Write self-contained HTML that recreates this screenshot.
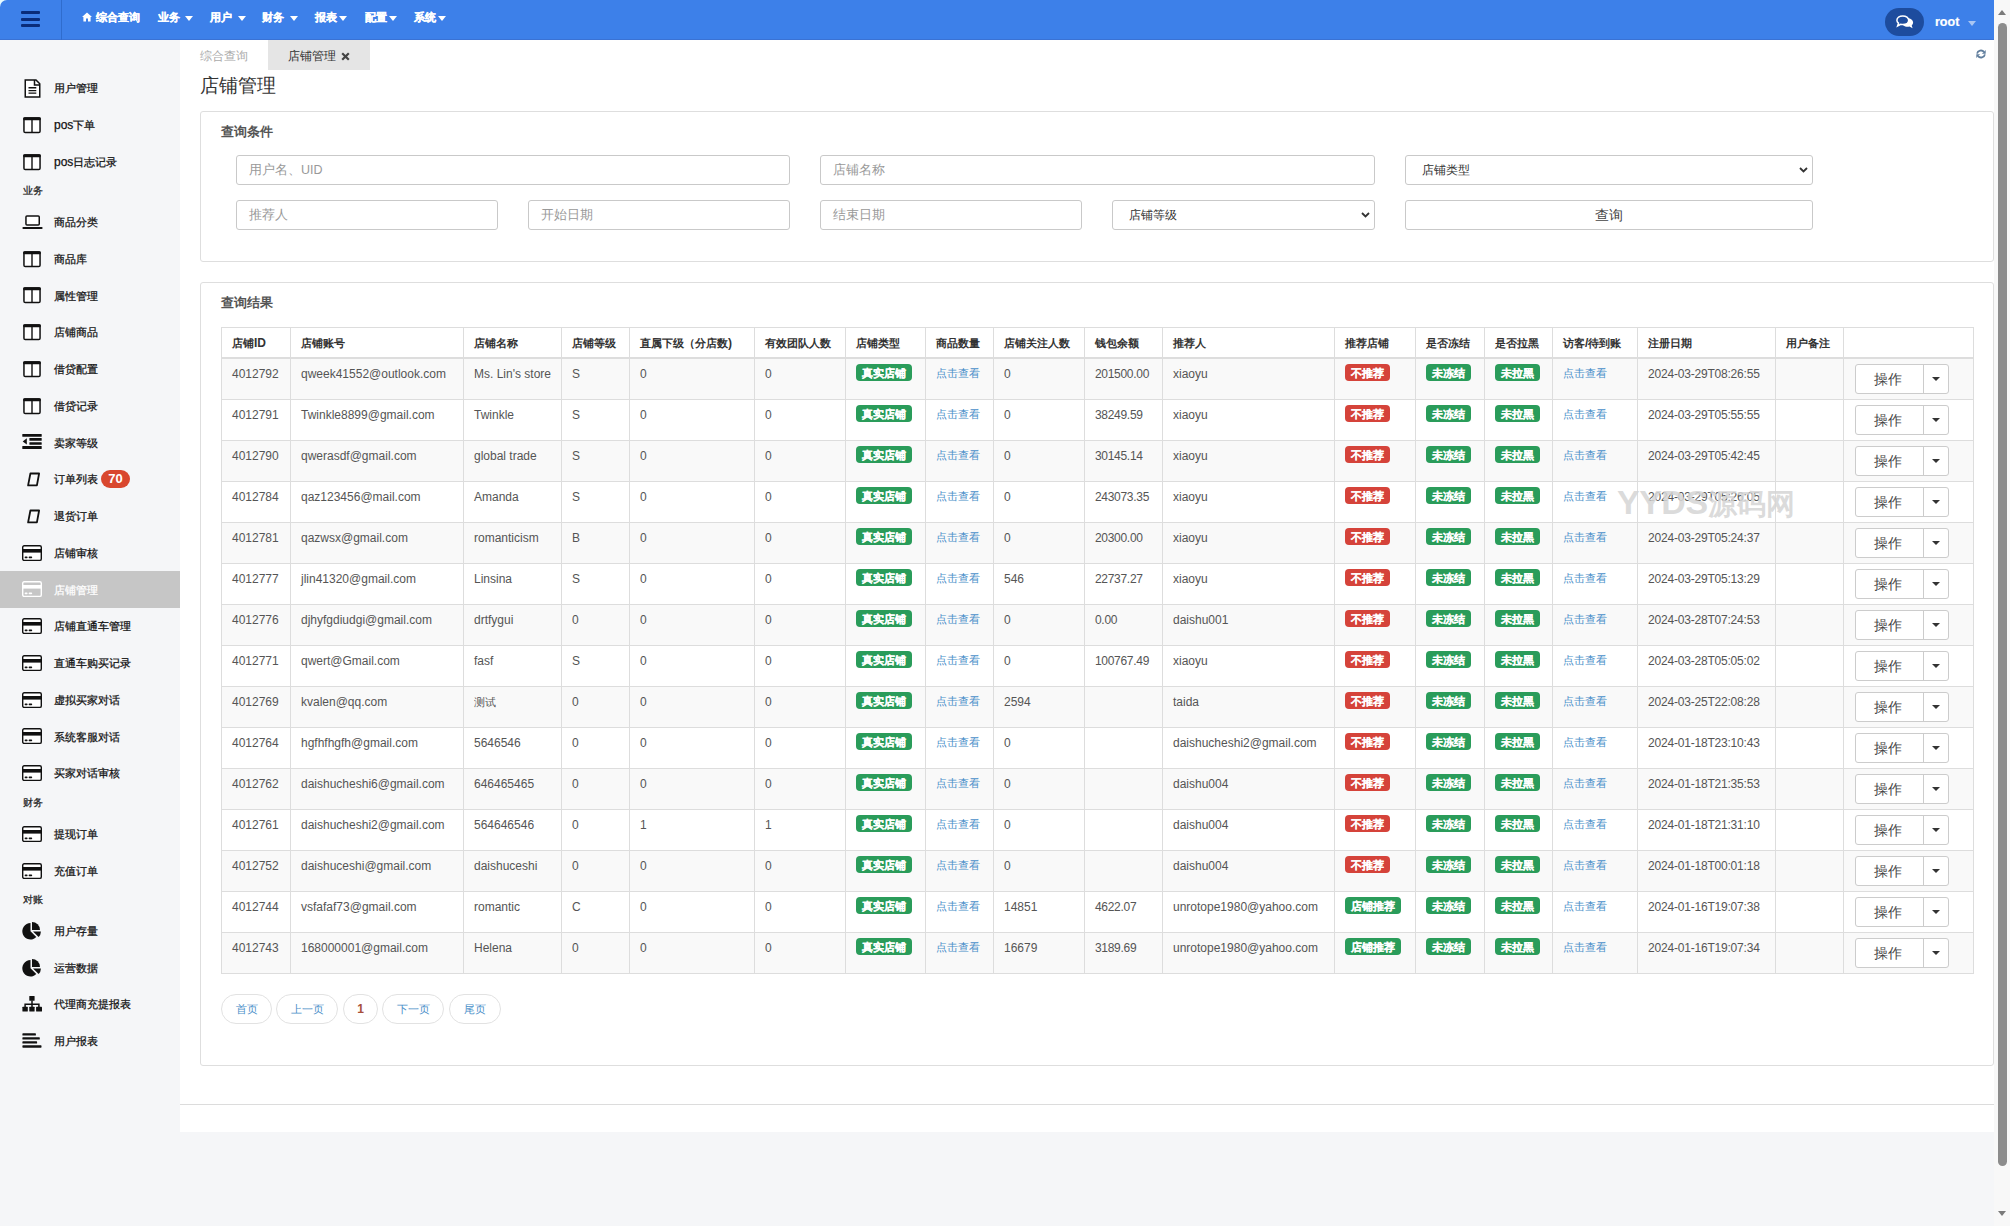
<!DOCTYPE html><html><head><meta charset="utf-8"><title>店铺管理</title><style>
*{box-sizing:border-box;margin:0;padding:0}
html,body{width:2010px;height:1226px;overflow:hidden}
body{background:#f5f6f8;font-family:"Liberation Sans", sans-serif;position:relative;color:#333}
.ab{position:absolute;white-space:nowrap}
.hd{position:absolute;left:0;top:0;width:1995px;height:40px;background:#3d80e9;border-top-left-radius:7px}
.mn{color:#fff;font-weight:bold;font-size:12px;line-height:14px;-webkit-text-stroke:0.2px #fff}
.car{position:absolute;width:0;height:0;border-left:4px solid transparent;border-right:4px solid transparent;border-top:5px solid #fff}
.side{font-size:12px;line-height:14px;color:#111;-webkit-text-stroke:0.25px currentColor}
.grp{font-size:11px;line-height:14px;color:#222;-webkit-text-stroke:0.25px currentColor}
.main{position:absolute;left:180px;top:40px;width:1814px;height:1092px;background:#fff}
.panel{position:absolute;border:1px solid #dedede;border-radius:3px;background:#fff}
.inp{position:absolute;height:30px;border:1px solid #c9c9c9;border-radius:3px;background:#fff;font-size:12px;color:#999;padding-left:12px;line-height:28px}
.td{font-size:12px;color:#555;line-height:14px}
.th{font-size:12px;color:#333;font-weight:bold;line-height:14px}
.bd{position:absolute;height:17px;border-radius:4px;color:#fff;font-size:11px;font-weight:bold;line-height:18.5px;text-align:center;-webkit-text-stroke:0.15px #fff;overflow:hidden}
.g{background:#2a9c5a}
.r{background:#d5433a}
.lk{color:#4a8fc9;font-size:12px;line-height:14px}
.pg{position:absolute;top:994px;height:30px;border:1px solid #e2e2e2;border-radius:15px;font-size:12px;line-height:28px;text-align:center;color:#4a8fc9;background:#fff}
</style></head><body>
<div class="ab" style="left:0;top:0;width:8px;height:8px;background:#e8fbff"></div>
<div class="hd"></div>
<div class="ab" style="left:0;top:39px;width:1995px;height:1px;background:#3a72d4"></div>
<div class="ab" style="left:61px;top:0;width:1px;height:40px;background:#2f6ccd"></div>
<div class="ab" style="left:21px;top:11px;width:19px;height:3px;border-radius:1px;background:#0a2c7a"></div>
<div class="ab" style="left:21px;top:18px;width:19px;height:3px;border-radius:1px;background:#0a2c7a"></div>
<div class="ab" style="left:21px;top:24px;width:19px;height:3px;border-radius:1px;background:#0a2c7a"></div>
<svg class="ab" style="left:82px;top:12px" width="10" height="10" viewBox="0 0 10 10"><path d="M5 0.5 L0 5 L1.4 5 L1.4 9.5 L4 9.5 L4 6.5 L6 6.5 L6 9.5 L8.6 9.5 L8.6 5 L10 5 Z" fill="#fff"/></svg>
<div class="ab mn" style="left:96px;top:10px"><span style="font-size:0.94em">综合查询</span></div>
<div class="ab mn" style="left:157.5px;top:10px"><span style="font-size:0.94em">业务</span></div>
<div class="car" style="left:184.5px;top:16px"></div>
<div class="ab mn" style="left:210px;top:10px"><span style="font-size:0.94em">用户</span></div>
<div class="car" style="left:238px;top:16px"></div>
<div class="ab mn" style="left:262px;top:10px"><span style="font-size:0.94em">财务</span></div>
<div class="car" style="left:289.5px;top:16px"></div>
<div class="ab mn" style="left:315px;top:10px"><span style="font-size:0.94em">报表</span></div>
<div class="car" style="left:339px;top:16px"></div>
<div class="ab mn" style="left:364.5px;top:10px"><span style="font-size:0.94em">配置</span></div>
<div class="car" style="left:388.5px;top:16px"></div>
<div class="ab mn" style="left:414px;top:10px"><span style="font-size:0.94em">系统</span></div>
<div class="car" style="left:438px;top:16px"></div>
<div class="ab" style="left:1885px;top:8px;width:39px;height:28px;border-radius:14px;background:#1d4c9e"></div>
<svg class="ab" style="left:1896px;top:14.5px" width="18" height="14" viewBox="0 0 18 14"><path d="M11.5 3.2c3.2 0 5.6 1.9 5.6 4.3 0 1.1-.5 2.1-1.4 2.9l.9 2.9-3.2-1.7c-.6.1-1.2.2-1.9.2-3.2 0-5.6-1.9-5.6-4.3s2.4-4.3 5.6-4.3z" fill="#fff"/><path d="M6.8 .9C3.5.9.9 2.8.9 5.2c0 1.2.6 2.2 1.6 3L1.6 10.9l3.1-1.6c.7.2 1.4.3 2.1.3 3.3 0 5.9-1.9 5.9-4.3S10.1.9 6.8.9z" fill="#1d4c9e" stroke="#fff" stroke-width="1.5"/></svg>
<div class="ab" style="left:1935px;top:15px;font-size:12.5px;font-weight:bold;color:#fff;line-height:14px;-webkit-text-stroke:0.2px #fff">root</div>
<div class="car" style="left:1968px;top:21px;border-top-color:#a9c6f3"></div>
<div class="ab" style="left:1994px;top:0;width:16px;height:1226px;background:#f8f8f8"></div>
<div class="ab" style="left:1998px;top:23px;width:9px;height:1143px;border-radius:5px;background:#8c8c8c"></div>
<div class="ab" style="left:1998px;top:10px;width:0;height:0;border-left:4.5px solid transparent;border-right:4.5px solid transparent;border-bottom:5px solid #7a7a7a"></div>
<div class="ab" style="left:1998px;top:1211px;width:0;height:0;border-left:4.5px solid transparent;border-right:4.5px solid transparent;border-top:5px solid #7a7a7a"></div>
<div class="ab" style="left:23.5px;top:78.75px;width:17px;height:19px;line-height:0"><svg width="17" height="19" viewBox="0 0 17 19"><path d="M1.25 .9H12L15.75 4.7V18.1H1.25z" fill="#fff" stroke="#111" stroke-width="1.5"/><path d="M10.5 .9V6h5.25" fill="none" stroke="#111" stroke-width="1.5"/><path d="M4.5 8.75h7.8M4.5 11.55h7.8M4.5 14.05h7.8" stroke="#111" stroke-width="1.3"/></svg></div>
<div class="ab side" style="left:54px;top:81.3px;color:#111"><span style="font-size:0.94em">用户管理</span></div>
<div class="ab" style="left:23px;top:116.80px;width:18px;height:17px;line-height:0"><svg width="18" height="17" viewBox="0 0 18 17"><rect x=".95" y=".95" width="16.1" height="14.6" rx="1.3" fill="#fff" stroke="#111" stroke-width="1.5"/><rect x=".2" y=".2" width="17.6" height="3" rx="1" fill="#111"/><path d="M9 1v15" stroke="#111" stroke-width="1.4"/></svg></div>
<div class="ab side" style="left:54px;top:118.0px;color:#111">pos<span style="font-size:0.94em">下单</span></div>
<div class="ab" style="left:23px;top:153.60px;width:18px;height:17px;line-height:0"><svg width="18" height="17" viewBox="0 0 18 17"><rect x=".95" y=".95" width="16.1" height="14.6" rx="1.3" fill="#fff" stroke="#111" stroke-width="1.5"/><rect x=".2" y=".2" width="17.6" height="3" rx="1" fill="#111"/><path d="M9 1v15" stroke="#111" stroke-width="1.4"/></svg></div>
<div class="ab side" style="left:54px;top:154.8px;color:#111">pos<span style="font-size:0.94em">日志记录</span></div>
<div class="ab grp" style="left:23px;top:182.7px"><span style="font-size:0.94em">业务</span></div>
<div class="ab" style="left:21.5px;top:215.00px;width:21px;height:14px;line-height:0"><svg width="21" height="14" viewBox="0 0 21 14"><rect x="3.95" y=".95" width="13.3" height="9.1" rx="1" fill="#fff" stroke="#111" stroke-width="1.5"/><rect x=".4" y="11.9" width="20.2" height="2.1" rx="1" fill="#111"/></svg></div>
<div class="ab side" style="left:54px;top:215.0px;color:#111"><span style="font-size:0.94em">商品分类</span></div>
<div class="ab" style="left:23px;top:250.55px;width:18px;height:17px;line-height:0"><svg width="18" height="17" viewBox="0 0 18 17"><rect x=".95" y=".95" width="16.1" height="14.6" rx="1.3" fill="#fff" stroke="#111" stroke-width="1.5"/><rect x=".2" y=".2" width="17.6" height="3" rx="1" fill="#111"/><path d="M9 1v15" stroke="#111" stroke-width="1.4"/></svg></div>
<div class="ab side" style="left:54px;top:251.8px;color:#111"><span style="font-size:0.94em">商品库</span></div>
<div class="ab" style="left:23px;top:287.30px;width:18px;height:17px;line-height:0"><svg width="18" height="17" viewBox="0 0 18 17"><rect x=".95" y=".95" width="16.1" height="14.6" rx="1.3" fill="#fff" stroke="#111" stroke-width="1.5"/><rect x=".2" y=".2" width="17.6" height="3" rx="1" fill="#111"/><path d="M9 1v15" stroke="#111" stroke-width="1.4"/></svg></div>
<div class="ab side" style="left:54px;top:288.5px;color:#111"><span style="font-size:0.94em">属性管理</span></div>
<div class="ab" style="left:23px;top:324.05px;width:18px;height:17px;line-height:0"><svg width="18" height="17" viewBox="0 0 18 17"><rect x=".95" y=".95" width="16.1" height="14.6" rx="1.3" fill="#fff" stroke="#111" stroke-width="1.5"/><rect x=".2" y=".2" width="17.6" height="3" rx="1" fill="#111"/><path d="M9 1v15" stroke="#111" stroke-width="1.4"/></svg></div>
<div class="ab side" style="left:54px;top:325.2px;color:#111"><span style="font-size:0.94em">店铺商品</span></div>
<div class="ab" style="left:23px;top:360.80px;width:18px;height:17px;line-height:0"><svg width="18" height="17" viewBox="0 0 18 17"><rect x=".95" y=".95" width="16.1" height="14.6" rx="1.3" fill="#fff" stroke="#111" stroke-width="1.5"/><rect x=".2" y=".2" width="17.6" height="3" rx="1" fill="#111"/><path d="M9 1v15" stroke="#111" stroke-width="1.4"/></svg></div>
<div class="ab side" style="left:54px;top:362.0px;color:#111"><span style="font-size:0.94em">借贷配置</span></div>
<div class="ab" style="left:23px;top:397.55px;width:18px;height:17px;line-height:0"><svg width="18" height="17" viewBox="0 0 18 17"><rect x=".95" y=".95" width="16.1" height="14.6" rx="1.3" fill="#fff" stroke="#111" stroke-width="1.5"/><rect x=".2" y=".2" width="17.6" height="3" rx="1" fill="#111"/><path d="M9 1v15" stroke="#111" stroke-width="1.4"/></svg></div>
<div class="ab side" style="left:54px;top:398.8px;color:#111"><span style="font-size:0.94em">借贷记录</span></div>
<div class="ab" style="left:22px;top:433.90px;width:20px;height:16px;line-height:0"><svg width="20" height="16" viewBox="0 0 20 16"><rect x=".3" y="0" width="19.4" height="2.75" rx=".5" fill="#111"/><rect x="7.4" y="4.1" width="12.3" height="2.6" rx=".5" fill="#111"/><rect x="7.4" y="8.2" width="12.3" height="2.5" rx=".5" fill="#111"/><rect x=".3" y="12" width="19.4" height="2.9" rx=".5" fill="#111"/><path d="M4.8 4.2L.7 7.4 4.8 10.6z" fill="#111"/></svg></div>
<div class="ab side" style="left:54px;top:435.5px;color:#111"><span style="font-size:0.94em">卖家等级</span></div>
<div class="ab" style="left:26px;top:471.85px;width:15px;height:15px;line-height:0"><svg width="15" height="15" viewBox="0 0 15 15"><path d="M4.4 1.5h8.7l-2.2 11.9H2.1z" fill="#f9fafb" stroke="#111" stroke-width="1.8" stroke-linejoin="round"/></svg></div>
<div class="ab side" style="left:54px;top:472.2px;color:#111"><span style="font-size:0.94em">订单列表</span></div>
<div class="ab" style="left:101px;top:470px;width:29px;height:18px;border-radius:9px;background:#d9472e;color:#fff;font-size:13px;font-weight:bold;line-height:18px;text-align:center">70</div>
<div class="ab" style="left:26px;top:508.60px;width:15px;height:15px;line-height:0"><svg width="15" height="15" viewBox="0 0 15 15"><path d="M4.4 1.5h8.7l-2.2 11.9H2.1z" fill="#f9fafb" stroke="#111" stroke-width="1.8" stroke-linejoin="round"/></svg></div>
<div class="ab side" style="left:54px;top:509.0px;color:#111"><span style="font-size:0.94em">退货订单</span></div>
<div class="ab" style="left:22px;top:544.65px;width:20px;height:17px;line-height:0"><svg width="20" height="17" viewBox="0 0 20 17"><rect x=".7" y=".7" width="18.6" height="14.7" rx="1.5" fill="#fff" stroke="#111" stroke-width="1.4"/><rect x=".7" y="4" width="18.6" height="3.6" fill="#111"/><rect x="2.6" y="11.6" width="3" height="1.6" rx=".8" fill="#111"/><rect x="6.6" y="11.6" width="3.6" height="1.6" rx=".8" fill="#111"/></svg></div>
<div class="ab side" style="left:54px;top:545.8px;color:#111"><span style="font-size:0.94em">店铺审核</span></div>
<div class="ab" style="left:0;top:571.1px;width:180px;height:36.7px;background:#c6c6c6"></div>
<div class="ab" style="left:22px;top:581.40px;width:20px;height:17px;line-height:0"><svg width="20" height="17" viewBox="0 0 20 17"><rect x=".7" y=".7" width="18.6" height="14.7" rx="1.5" fill="#c6c6c6" stroke="#fff" stroke-width="1.4"/><rect x=".7" y="4" width="18.6" height="3.6" fill="#fff"/><rect x="2.6" y="11.6" width="3" height="1.6" rx=".8" fill="#fff"/><rect x="6.6" y="11.6" width="3.6" height="1.6" rx=".8" fill="#fff"/></svg></div>
<div class="ab side" style="left:54px;top:582.5px;color:#fff"><span style="font-size:0.94em">店铺管理</span></div>
<div class="ab" style="left:22px;top:618.15px;width:20px;height:17px;line-height:0"><svg width="20" height="17" viewBox="0 0 20 17"><rect x=".7" y=".7" width="18.6" height="14.7" rx="1.5" fill="#fff" stroke="#111" stroke-width="1.4"/><rect x=".7" y="4" width="18.6" height="3.6" fill="#111"/><rect x="2.6" y="11.6" width="3" height="1.6" rx=".8" fill="#111"/><rect x="6.6" y="11.6" width="3.6" height="1.6" rx=".8" fill="#111"/></svg></div>
<div class="ab side" style="left:54px;top:619.2px;color:#111"><span style="font-size:0.94em">店铺直通车管理</span></div>
<div class="ab" style="left:22px;top:654.90px;width:20px;height:17px;line-height:0"><svg width="20" height="17" viewBox="0 0 20 17"><rect x=".7" y=".7" width="18.6" height="14.7" rx="1.5" fill="#fff" stroke="#111" stroke-width="1.4"/><rect x=".7" y="4" width="18.6" height="3.6" fill="#111"/><rect x="2.6" y="11.6" width="3" height="1.6" rx=".8" fill="#111"/><rect x="6.6" y="11.6" width="3.6" height="1.6" rx=".8" fill="#111"/></svg></div>
<div class="ab side" style="left:54px;top:656.0px;color:#111"><span style="font-size:0.94em">直通车购买记录</span></div>
<div class="ab" style="left:22px;top:691.65px;width:20px;height:17px;line-height:0"><svg width="20" height="17" viewBox="0 0 20 17"><rect x=".7" y=".7" width="18.6" height="14.7" rx="1.5" fill="#fff" stroke="#111" stroke-width="1.4"/><rect x=".7" y="4" width="18.6" height="3.6" fill="#111"/><rect x="2.6" y="11.6" width="3" height="1.6" rx=".8" fill="#111"/><rect x="6.6" y="11.6" width="3.6" height="1.6" rx=".8" fill="#111"/></svg></div>
<div class="ab side" style="left:54px;top:692.8px;color:#111"><span style="font-size:0.94em">虚拟买家对话</span></div>
<div class="ab" style="left:22px;top:728.40px;width:20px;height:17px;line-height:0"><svg width="20" height="17" viewBox="0 0 20 17"><rect x=".7" y=".7" width="18.6" height="14.7" rx="1.5" fill="#fff" stroke="#111" stroke-width="1.4"/><rect x=".7" y="4" width="18.6" height="3.6" fill="#111"/><rect x="2.6" y="11.6" width="3" height="1.6" rx=".8" fill="#111"/><rect x="6.6" y="11.6" width="3.6" height="1.6" rx=".8" fill="#111"/></svg></div>
<div class="ab side" style="left:54px;top:729.5px;color:#111"><span style="font-size:0.94em">系统客服对话</span></div>
<div class="ab" style="left:22px;top:765.15px;width:20px;height:17px;line-height:0"><svg width="20" height="17" viewBox="0 0 20 17"><rect x=".7" y=".7" width="18.6" height="14.7" rx="1.5" fill="#fff" stroke="#111" stroke-width="1.4"/><rect x=".7" y="4" width="18.6" height="3.6" fill="#111"/><rect x="2.6" y="11.6" width="3" height="1.6" rx=".8" fill="#111"/><rect x="6.6" y="11.6" width="3.6" height="1.6" rx=".8" fill="#111"/></svg></div>
<div class="ab side" style="left:54px;top:766.2px;color:#111"><span style="font-size:0.94em">买家对话审核</span></div>
<div class="ab grp" style="left:23px;top:794.7px"><span style="font-size:0.94em">财务</span></div>
<div class="ab" style="left:22px;top:825.90px;width:20px;height:17px;line-height:0"><svg width="20" height="17" viewBox="0 0 20 17"><rect x=".7" y=".7" width="18.6" height="14.7" rx="1.5" fill="#fff" stroke="#111" stroke-width="1.4"/><rect x=".7" y="4" width="18.6" height="3.6" fill="#111"/><rect x="2.6" y="11.6" width="3" height="1.6" rx=".8" fill="#111"/><rect x="6.6" y="11.6" width="3.6" height="1.6" rx=".8" fill="#111"/></svg></div>
<div class="ab side" style="left:54px;top:827.0px;color:#111"><span style="font-size:0.94em">提现订单</span></div>
<div class="ab" style="left:22px;top:862.70px;width:20px;height:17px;line-height:0"><svg width="20" height="17" viewBox="0 0 20 17"><rect x=".7" y=".7" width="18.6" height="14.7" rx="1.5" fill="#fff" stroke="#111" stroke-width="1.4"/><rect x=".7" y="4" width="18.6" height="3.6" fill="#111"/><rect x="2.6" y="11.6" width="3" height="1.6" rx=".8" fill="#111"/><rect x="6.6" y="11.6" width="3.6" height="1.6" rx=".8" fill="#111"/></svg></div>
<div class="ab side" style="left:54px;top:863.8px;color:#111"><span style="font-size:0.94em">充值订单</span></div>
<div class="ab grp" style="left:23px;top:892.4px"><span style="font-size:0.94em">对账</span></div>
<div class="ab" style="left:22px;top:921.90px;width:20px;height:18px;line-height:0"><svg width="20" height="18" viewBox="0 0 20 18"><path d="M8.5 9.3V1.1A8.2 8.2 0 1 0 14.3 15.1z" fill="#111"/><path d="M10 7.9V0A8 8 0 0 1 18 7.9z" fill="#111"/><path d="M11 9.4h7.9A8 8 0 0 1 16.6 15z" fill="#111"/></svg></div>
<div class="ab side" style="left:54px;top:923.9px;color:#111"><span style="font-size:0.94em">用户存量</span></div>
<div class="ab" style="left:22px;top:958.65px;width:20px;height:18px;line-height:0"><svg width="20" height="18" viewBox="0 0 20 18"><path d="M8.5 9.3V1.1A8.2 8.2 0 1 0 14.3 15.1z" fill="#111"/><path d="M10 7.9V0A8 8 0 0 1 18 7.9z" fill="#111"/><path d="M11 9.4h7.9A8 8 0 0 1 16.6 15z" fill="#111"/></svg></div>
<div class="ab side" style="left:54px;top:960.6px;color:#111"><span style="font-size:0.94em">运营数据</span></div>
<div class="ab" style="left:22px;top:995.90px;width:20px;height:16px;line-height:0"><svg width="20" height="16" viewBox="0 0 20 16"><rect x="7.3" y="0" width="5.3" height="4.8" rx=".6" fill="#111"/><path d="M10 4.5v6.5M3.1 11V8.25h13.8V11" fill="none" stroke="#111" stroke-width="1.5"/><rect x=".4" y="10.7" width="5.4" height="4.9" rx=".6" fill="#111"/><rect x="7.3" y="10.7" width="5.3" height="4.9" rx=".6" fill="#111"/><rect x="14.1" y="10.7" width="5.9" height="4.9" rx=".6" fill="#111"/></svg></div>
<div class="ab side" style="left:54px;top:997.4px;color:#111"><span style="font-size:0.94em">代理商充提报表</span></div>
<div class="ab" style="left:22px;top:1033.45px;width:20px;height:15px;line-height:0"><svg width="20" height="15" viewBox="0 0 20 15"><rect x=".4" y=".3" width="13.5" height="2.2" rx=".6" fill="#111"/><rect x=".4" y="4.2" width="17.4" height="2.4" rx=".6" fill="#111"/><rect x=".4" y="8.3" width="14.7" height="2.2" rx=".6" fill="#111"/><rect x=".4" y="12.3" width="19.1" height="2.4" rx=".6" fill="#111"/></svg></div>
<div class="ab side" style="left:54px;top:1034.2px;color:#111"><span style="font-size:0.94em">用户报表</span></div>
<div class="main"></div>
<div class="ab" style="left:180px;top:1104px;width:1814px;height:1px;background:#dcdcdc"></div>
<div class="ab" style="left:200px;top:49px;font-size:12px;line-height:14px;color:#aaa">综合查询</div>
<div class="ab" style="left:268px;top:40px;width:102px;height:30px;background:#e5e5e5"></div>
<div class="ab" style="left:288px;top:49px;font-size:12px;line-height:14px;color:#333">店铺管理</div>
<svg class="ab" style="left:341px;top:52px" width="9" height="9" viewBox="0 0 9 9"><path d="M1.2 1.2l6.6 6.6M7.8 1.2l-6.6 6.6" stroke="#444" stroke-width="2.2"/></svg>
<svg class="ab" style="left:1975.5px;top:48.8px" width="10" height="10" viewBox="0 0 10 10"><path d="M1.1 4.6A3.9 3.7 0 0 1 8 2.9" fill="none" stroke="#5f7d9c" stroke-width="1.8"/><path d="M9.7 .9v3.8H5.9z" fill="#5f7d9c"/><path d="M8.9 5.4A3.9 3.7 0 0 1 2 7.1" fill="none" stroke="#5f7d9c" stroke-width="1.8"/><path d="M.3 9.1V5.3h3.8z" fill="#5f7d9c"/></svg>
<div class="ab" style="left:200px;top:73px;font-size:20px;line-height:24px;color:#333"><span style="font-size:0.955em">店铺管理</span></div>
<div class="panel" style="left:200px;top:111px;width:1794px;height:151px"></div>
<div class="ab" style="left:221px;top:124px;font-size:13px;font-weight:bold;line-height:15px;color:#555">查询条件</div>
<div class="inp" style="left:236px;top:155px;width:554px;color:#999;font-size:12.5px;padding-left:12px">用户名、UID</div>
<div class="inp" style="left:820px;top:155px;width:555px;color:#999;font-size:12.5px;padding-left:12px">店铺名称</div>
<div class="inp" style="left:1405px;top:155px;width:408px;color:#333;font-size:12px;padding-left:16px">店铺类型</div>
<svg class="ab" style="left:1799px;top:167px" width="9" height="6" viewBox="0 0 9 6"><path d="M1 1l3.5 3.5L8 1" fill="none" stroke="#333" stroke-width="1.8"/></svg>
<div class="inp" style="left:236px;top:200px;width:262px;color:#999;font-size:12.5px;padding-left:12px">推荐人</div>
<div class="inp" style="left:528px;top:200px;width:262px;color:#999;font-size:12.5px;padding-left:12px">开始日期</div>
<div class="inp" style="left:820px;top:200px;width:262px;color:#999;font-size:12.5px;padding-left:12px">结束日期</div>
<div class="inp" style="left:1112px;top:200px;width:263px;color:#333;font-size:12px;padding-left:16px">店铺等级</div>
<svg class="ab" style="left:1361px;top:212px" width="9" height="6" viewBox="0 0 9 6"><path d="M1 1l3.5 3.5L8 1" fill="none" stroke="#333" stroke-width="1.8"/></svg>
<div class="inp" style="left:1405px;top:200px;width:408px;text-align:center;color:#444;padding-left:0;font-size:14px">查询</div>
<div class="panel" style="left:200px;top:282px;width:1794px;height:784px"></div>
<div class="ab" style="left:221px;top:295px;font-size:13px;font-weight:bold;line-height:15px;color:#555">查询结果</div>
<div class="ab" style="left:221px;top:359px;width:1752px;height:41px;background:#f9f9f9"></div>
<div class="ab" style="left:221px;top:400px;width:1752px;height:41px;background:#fff"></div>
<div class="ab" style="left:221px;top:441px;width:1752px;height:41px;background:#f9f9f9"></div>
<div class="ab" style="left:221px;top:482px;width:1752px;height:41px;background:#fff"></div>
<div class="ab" style="left:221px;top:523px;width:1752px;height:41px;background:#f9f9f9"></div>
<div class="ab" style="left:221px;top:564px;width:1752px;height:41px;background:#fff"></div>
<div class="ab" style="left:221px;top:605px;width:1752px;height:41px;background:#f9f9f9"></div>
<div class="ab" style="left:221px;top:646px;width:1752px;height:41px;background:#fff"></div>
<div class="ab" style="left:221px;top:687px;width:1752px;height:41px;background:#f9f9f9"></div>
<div class="ab" style="left:221px;top:728px;width:1752px;height:41px;background:#fff"></div>
<div class="ab" style="left:221px;top:769px;width:1752px;height:41px;background:#f9f9f9"></div>
<div class="ab" style="left:221px;top:810px;width:1752px;height:41px;background:#fff"></div>
<div class="ab" style="left:221px;top:851px;width:1752px;height:41px;background:#f9f9f9"></div>
<div class="ab" style="left:221px;top:892px;width:1752px;height:41px;background:#fff"></div>
<div class="ab" style="left:221px;top:933px;width:1752px;height:41px;background:#f9f9f9"></div>
<div class="ab" style="left:221px;top:327px;width:1753px;height:1px;background:#dddddd"></div>
<div class="ab" style="left:221px;top:357px;width:1753px;height:2px;background:#dddddd"></div>
<div class="ab" style="left:221px;top:399px;width:1753px;height:1px;background:#dddddd"></div>
<div class="ab" style="left:221px;top:440px;width:1753px;height:1px;background:#dddddd"></div>
<div class="ab" style="left:221px;top:481px;width:1753px;height:1px;background:#dddddd"></div>
<div class="ab" style="left:221px;top:522px;width:1753px;height:1px;background:#dddddd"></div>
<div class="ab" style="left:221px;top:563px;width:1753px;height:1px;background:#dddddd"></div>
<div class="ab" style="left:221px;top:604px;width:1753px;height:1px;background:#dddddd"></div>
<div class="ab" style="left:221px;top:645px;width:1753px;height:1px;background:#dddddd"></div>
<div class="ab" style="left:221px;top:686px;width:1753px;height:1px;background:#dddddd"></div>
<div class="ab" style="left:221px;top:727px;width:1753px;height:1px;background:#dddddd"></div>
<div class="ab" style="left:221px;top:768px;width:1753px;height:1px;background:#dddddd"></div>
<div class="ab" style="left:221px;top:809px;width:1753px;height:1px;background:#dddddd"></div>
<div class="ab" style="left:221px;top:850px;width:1753px;height:1px;background:#dddddd"></div>
<div class="ab" style="left:221px;top:891px;width:1753px;height:1px;background:#dddddd"></div>
<div class="ab" style="left:221px;top:932px;width:1753px;height:1px;background:#dddddd"></div>
<div class="ab" style="left:221px;top:973px;width:1753px;height:1px;background:#dddddd"></div>
<div class="ab" style="left:221px;top:327px;width:1px;height:647px;background:#dddddd"></div>
<div class="ab" style="left:290px;top:327px;width:1px;height:647px;background:#dddddd"></div>
<div class="ab" style="left:463px;top:327px;width:1px;height:647px;background:#dddddd"></div>
<div class="ab" style="left:561px;top:327px;width:1px;height:647px;background:#dddddd"></div>
<div class="ab" style="left:629px;top:327px;width:1px;height:647px;background:#dddddd"></div>
<div class="ab" style="left:754px;top:327px;width:1px;height:647px;background:#dddddd"></div>
<div class="ab" style="left:845px;top:327px;width:1px;height:647px;background:#dddddd"></div>
<div class="ab" style="left:925px;top:327px;width:1px;height:647px;background:#dddddd"></div>
<div class="ab" style="left:993px;top:327px;width:1px;height:647px;background:#dddddd"></div>
<div class="ab" style="left:1084px;top:327px;width:1px;height:647px;background:#dddddd"></div>
<div class="ab" style="left:1162px;top:327px;width:1px;height:647px;background:#dddddd"></div>
<div class="ab" style="left:1334px;top:327px;width:1px;height:647px;background:#dddddd"></div>
<div class="ab" style="left:1415px;top:327px;width:1px;height:647px;background:#dddddd"></div>
<div class="ab" style="left:1484px;top:327px;width:1px;height:647px;background:#dddddd"></div>
<div class="ab" style="left:1552px;top:327px;width:1px;height:647px;background:#dddddd"></div>
<div class="ab" style="left:1637px;top:327px;width:1px;height:647px;background:#dddddd"></div>
<div class="ab" style="left:1775px;top:327px;width:1px;height:647px;background:#dddddd"></div>
<div class="ab" style="left:1843px;top:327px;width:1px;height:647px;background:#dddddd"></div>
<div class="ab" style="left:1973px;top:327px;width:1px;height:647px;background:#dddddd"></div>
<div class="ab th" style="left:232px;top:335.5px"><span style="font-size:0.94em">店铺</span>ID</div>
<div class="ab th" style="left:301px;top:335.5px"><span style="font-size:0.94em">店铺账号</span></div>
<div class="ab th" style="left:474px;top:335.5px"><span style="font-size:0.94em">店铺名称</span></div>
<div class="ab th" style="left:572px;top:335.5px"><span style="font-size:0.94em">店铺等级</span></div>
<div class="ab th" style="left:640px;top:335.5px"><span style="font-size:0.94em">直属下级（分店数</span>)</div>
<div class="ab th" style="left:765px;top:335.5px"><span style="font-size:0.94em">有效团队人数</span></div>
<div class="ab th" style="left:856px;top:335.5px"><span style="font-size:0.94em">店铺类型</span></div>
<div class="ab th" style="left:936px;top:335.5px"><span style="font-size:0.94em">商品数量</span></div>
<div class="ab th" style="left:1004px;top:335.5px"><span style="font-size:0.94em">店铺关注人数</span></div>
<div class="ab th" style="left:1095px;top:335.5px"><span style="font-size:0.94em">钱包余额</span></div>
<div class="ab th" style="left:1173px;top:335.5px"><span style="font-size:0.94em">推荐人</span></div>
<div class="ab th" style="left:1345px;top:335.5px"><span style="font-size:0.94em">推荐店铺</span></div>
<div class="ab th" style="left:1426px;top:335.5px"><span style="font-size:0.94em">是否冻结</span></div>
<div class="ab th" style="left:1495px;top:335.5px"><span style="font-size:0.94em">是否拉黑</span></div>
<div class="ab th" style="left:1563px;top:335.5px"><span style="font-size:0.94em">访客</span>/<span style="font-size:0.94em">待到账</span></div>
<div class="ab th" style="left:1648px;top:335.5px"><span style="font-size:0.94em">注册日期</span></div>
<div class="ab th" style="left:1786px;top:335.5px"><span style="font-size:0.94em">用户备注</span></div>
<div class="ab td" style="left:232px;top:367px">4012792</div>
<div class="ab td" style="left:301px;top:367px">qweek41552@outlook.com</div>
<div class="ab td" style="left:474px;top:367px">Ms. Lin's store</div>
<div class="ab td" style="left:572px;top:367px">S</div>
<div class="ab td" style="left:640px;top:367px">0</div>
<div class="ab td" style="left:765px;top:367px">0</div>
<div class="bd g" style="left:856px;top:364px;width:56px">真实店铺</div>
<div class="ab lk" style="left:936px;top:366px"><span style="font-size:0.94em">点击查看</span></div>
<div class="ab td" style="left:1004px;top:367px">0</div>
<div class="ab td" style="left:1095px;top:367px;letter-spacing:-0.3px">201500.00</div>
<div class="ab td" style="left:1173px;top:367px">xiaoyu</div>
<div class="bd r" style="left:1345px;top:364px;width:45px">不推荐</div>
<div class="bd g" style="left:1426px;top:364px;width:45px">未冻结</div>
<div class="bd g" style="left:1495px;top:364px;width:45px">未拉黑</div>
<div class="ab lk" style="left:1563px;top:366px"><span style="font-size:0.94em">点击查看</span></div>
<div class="ab td" style="left:1648px;top:367px;letter-spacing:-0.2px">2024-03-29T08:26:55</div>
<div class="ab" style="left:1855px;top:364px;width:94px;height:30px;border:1px solid #ccc;border-radius:3px;background:#fff"></div>
<div class="ab" style="left:1923px;top:364px;width:1px;height:30px;background:#ccc"></div>
<div class="ab" style="left:1874px;top:371px;font-size:14px;line-height:16px;color:#444">操作</div>
<div class="car" style="left:1932px;top:377px;border-top-color:#333;border-left-width:4px;border-right-width:4px;border-top-width:4px"></div>
<div class="ab td" style="left:232px;top:408px">4012791</div>
<div class="ab td" style="left:301px;top:408px">Twinkle8899@gmail.com</div>
<div class="ab td" style="left:474px;top:408px">Twinkle</div>
<div class="ab td" style="left:572px;top:408px">S</div>
<div class="ab td" style="left:640px;top:408px">0</div>
<div class="ab td" style="left:765px;top:408px">0</div>
<div class="bd g" style="left:856px;top:405px;width:56px">真实店铺</div>
<div class="ab lk" style="left:936px;top:407px"><span style="font-size:0.94em">点击查看</span></div>
<div class="ab td" style="left:1004px;top:408px">0</div>
<div class="ab td" style="left:1095px;top:408px;letter-spacing:-0.3px">38249.59</div>
<div class="ab td" style="left:1173px;top:408px">xiaoyu</div>
<div class="bd r" style="left:1345px;top:405px;width:45px">不推荐</div>
<div class="bd g" style="left:1426px;top:405px;width:45px">未冻结</div>
<div class="bd g" style="left:1495px;top:405px;width:45px">未拉黑</div>
<div class="ab lk" style="left:1563px;top:407px"><span style="font-size:0.94em">点击查看</span></div>
<div class="ab td" style="left:1648px;top:408px;letter-spacing:-0.2px">2024-03-29T05:55:55</div>
<div class="ab" style="left:1855px;top:405px;width:94px;height:30px;border:1px solid #ccc;border-radius:3px;background:#fff"></div>
<div class="ab" style="left:1923px;top:405px;width:1px;height:30px;background:#ccc"></div>
<div class="ab" style="left:1874px;top:412px;font-size:14px;line-height:16px;color:#444">操作</div>
<div class="car" style="left:1932px;top:418px;border-top-color:#333;border-left-width:4px;border-right-width:4px;border-top-width:4px"></div>
<div class="ab td" style="left:232px;top:449px">4012790</div>
<div class="ab td" style="left:301px;top:449px">qwerasdf@gmail.com</div>
<div class="ab td" style="left:474px;top:449px">global trade</div>
<div class="ab td" style="left:572px;top:449px">S</div>
<div class="ab td" style="left:640px;top:449px">0</div>
<div class="ab td" style="left:765px;top:449px">0</div>
<div class="bd g" style="left:856px;top:446px;width:56px">真实店铺</div>
<div class="ab lk" style="left:936px;top:448px"><span style="font-size:0.94em">点击查看</span></div>
<div class="ab td" style="left:1004px;top:449px">0</div>
<div class="ab td" style="left:1095px;top:449px;letter-spacing:-0.3px">30145.14</div>
<div class="ab td" style="left:1173px;top:449px">xiaoyu</div>
<div class="bd r" style="left:1345px;top:446px;width:45px">不推荐</div>
<div class="bd g" style="left:1426px;top:446px;width:45px">未冻结</div>
<div class="bd g" style="left:1495px;top:446px;width:45px">未拉黑</div>
<div class="ab lk" style="left:1563px;top:448px"><span style="font-size:0.94em">点击查看</span></div>
<div class="ab td" style="left:1648px;top:449px;letter-spacing:-0.2px">2024-03-29T05:42:45</div>
<div class="ab" style="left:1855px;top:446px;width:94px;height:30px;border:1px solid #ccc;border-radius:3px;background:#fff"></div>
<div class="ab" style="left:1923px;top:446px;width:1px;height:30px;background:#ccc"></div>
<div class="ab" style="left:1874px;top:453px;font-size:14px;line-height:16px;color:#444">操作</div>
<div class="car" style="left:1932px;top:459px;border-top-color:#333;border-left-width:4px;border-right-width:4px;border-top-width:4px"></div>
<div class="ab td" style="left:232px;top:490px">4012784</div>
<div class="ab td" style="left:301px;top:490px">qaz123456@mail.com</div>
<div class="ab td" style="left:474px;top:490px">Amanda</div>
<div class="ab td" style="left:572px;top:490px">S</div>
<div class="ab td" style="left:640px;top:490px">0</div>
<div class="ab td" style="left:765px;top:490px">0</div>
<div class="bd g" style="left:856px;top:487px;width:56px">真实店铺</div>
<div class="ab lk" style="left:936px;top:489px"><span style="font-size:0.94em">点击查看</span></div>
<div class="ab td" style="left:1004px;top:490px">0</div>
<div class="ab td" style="left:1095px;top:490px;letter-spacing:-0.3px">243073.35</div>
<div class="ab td" style="left:1173px;top:490px">xiaoyu</div>
<div class="bd r" style="left:1345px;top:487px;width:45px">不推荐</div>
<div class="bd g" style="left:1426px;top:487px;width:45px">未冻结</div>
<div class="bd g" style="left:1495px;top:487px;width:45px">未拉黑</div>
<div class="ab lk" style="left:1563px;top:489px"><span style="font-size:0.94em">点击查看</span></div>
<div class="ab td" style="left:1648px;top:490px;letter-spacing:-0.2px">2024-03-29T05:26:05</div>
<div class="ab" style="left:1855px;top:487px;width:94px;height:30px;border:1px solid #ccc;border-radius:3px;background:#fff"></div>
<div class="ab" style="left:1923px;top:487px;width:1px;height:30px;background:#ccc"></div>
<div class="ab" style="left:1874px;top:494px;font-size:14px;line-height:16px;color:#444">操作</div>
<div class="car" style="left:1932px;top:500px;border-top-color:#333;border-left-width:4px;border-right-width:4px;border-top-width:4px"></div>
<div class="ab td" style="left:232px;top:531px">4012781</div>
<div class="ab td" style="left:301px;top:531px">qazwsx@gmail.com</div>
<div class="ab td" style="left:474px;top:531px">romanticism</div>
<div class="ab td" style="left:572px;top:531px">B</div>
<div class="ab td" style="left:640px;top:531px">0</div>
<div class="ab td" style="left:765px;top:531px">0</div>
<div class="bd g" style="left:856px;top:528px;width:56px">真实店铺</div>
<div class="ab lk" style="left:936px;top:530px"><span style="font-size:0.94em">点击查看</span></div>
<div class="ab td" style="left:1004px;top:531px">0</div>
<div class="ab td" style="left:1095px;top:531px;letter-spacing:-0.3px">20300.00</div>
<div class="ab td" style="left:1173px;top:531px">xiaoyu</div>
<div class="bd r" style="left:1345px;top:528px;width:45px">不推荐</div>
<div class="bd g" style="left:1426px;top:528px;width:45px">未冻结</div>
<div class="bd g" style="left:1495px;top:528px;width:45px">未拉黑</div>
<div class="ab lk" style="left:1563px;top:530px"><span style="font-size:0.94em">点击查看</span></div>
<div class="ab td" style="left:1648px;top:531px;letter-spacing:-0.2px">2024-03-29T05:24:37</div>
<div class="ab" style="left:1855px;top:528px;width:94px;height:30px;border:1px solid #ccc;border-radius:3px;background:#fff"></div>
<div class="ab" style="left:1923px;top:528px;width:1px;height:30px;background:#ccc"></div>
<div class="ab" style="left:1874px;top:535px;font-size:14px;line-height:16px;color:#444">操作</div>
<div class="car" style="left:1932px;top:541px;border-top-color:#333;border-left-width:4px;border-right-width:4px;border-top-width:4px"></div>
<div class="ab td" style="left:232px;top:572px">4012777</div>
<div class="ab td" style="left:301px;top:572px">jlin41320@gmail.com</div>
<div class="ab td" style="left:474px;top:572px">Linsina</div>
<div class="ab td" style="left:572px;top:572px">S</div>
<div class="ab td" style="left:640px;top:572px">0</div>
<div class="ab td" style="left:765px;top:572px">0</div>
<div class="bd g" style="left:856px;top:569px;width:56px">真实店铺</div>
<div class="ab lk" style="left:936px;top:571px"><span style="font-size:0.94em">点击查看</span></div>
<div class="ab td" style="left:1004px;top:572px">546</div>
<div class="ab td" style="left:1095px;top:572px;letter-spacing:-0.3px">22737.27</div>
<div class="ab td" style="left:1173px;top:572px">xiaoyu</div>
<div class="bd r" style="left:1345px;top:569px;width:45px">不推荐</div>
<div class="bd g" style="left:1426px;top:569px;width:45px">未冻结</div>
<div class="bd g" style="left:1495px;top:569px;width:45px">未拉黑</div>
<div class="ab lk" style="left:1563px;top:571px"><span style="font-size:0.94em">点击查看</span></div>
<div class="ab td" style="left:1648px;top:572px;letter-spacing:-0.2px">2024-03-29T05:13:29</div>
<div class="ab" style="left:1855px;top:569px;width:94px;height:30px;border:1px solid #ccc;border-radius:3px;background:#fff"></div>
<div class="ab" style="left:1923px;top:569px;width:1px;height:30px;background:#ccc"></div>
<div class="ab" style="left:1874px;top:576px;font-size:14px;line-height:16px;color:#444">操作</div>
<div class="car" style="left:1932px;top:582px;border-top-color:#333;border-left-width:4px;border-right-width:4px;border-top-width:4px"></div>
<div class="ab td" style="left:232px;top:613px">4012776</div>
<div class="ab td" style="left:301px;top:613px">djhyfgdiudgi@gmail.com</div>
<div class="ab td" style="left:474px;top:613px">drtfygui</div>
<div class="ab td" style="left:572px;top:613px">0</div>
<div class="ab td" style="left:640px;top:613px">0</div>
<div class="ab td" style="left:765px;top:613px">0</div>
<div class="bd g" style="left:856px;top:610px;width:56px">真实店铺</div>
<div class="ab lk" style="left:936px;top:612px"><span style="font-size:0.94em">点击查看</span></div>
<div class="ab td" style="left:1004px;top:613px">0</div>
<div class="ab td" style="left:1095px;top:613px;letter-spacing:-0.3px">0.00</div>
<div class="ab td" style="left:1173px;top:613px">daishu001</div>
<div class="bd r" style="left:1345px;top:610px;width:45px">不推荐</div>
<div class="bd g" style="left:1426px;top:610px;width:45px">未冻结</div>
<div class="bd g" style="left:1495px;top:610px;width:45px">未拉黑</div>
<div class="ab lk" style="left:1563px;top:612px"><span style="font-size:0.94em">点击查看</span></div>
<div class="ab td" style="left:1648px;top:613px;letter-spacing:-0.2px">2024-03-28T07:24:53</div>
<div class="ab" style="left:1855px;top:610px;width:94px;height:30px;border:1px solid #ccc;border-radius:3px;background:#fff"></div>
<div class="ab" style="left:1923px;top:610px;width:1px;height:30px;background:#ccc"></div>
<div class="ab" style="left:1874px;top:617px;font-size:14px;line-height:16px;color:#444">操作</div>
<div class="car" style="left:1932px;top:623px;border-top-color:#333;border-left-width:4px;border-right-width:4px;border-top-width:4px"></div>
<div class="ab td" style="left:232px;top:654px">4012771</div>
<div class="ab td" style="left:301px;top:654px">qwert@Gmail.com</div>
<div class="ab td" style="left:474px;top:654px">fasf</div>
<div class="ab td" style="left:572px;top:654px">S</div>
<div class="ab td" style="left:640px;top:654px">0</div>
<div class="ab td" style="left:765px;top:654px">0</div>
<div class="bd g" style="left:856px;top:651px;width:56px">真实店铺</div>
<div class="ab lk" style="left:936px;top:653px"><span style="font-size:0.94em">点击查看</span></div>
<div class="ab td" style="left:1004px;top:654px">0</div>
<div class="ab td" style="left:1095px;top:654px;letter-spacing:-0.3px">100767.49</div>
<div class="ab td" style="left:1173px;top:654px">xiaoyu</div>
<div class="bd r" style="left:1345px;top:651px;width:45px">不推荐</div>
<div class="bd g" style="left:1426px;top:651px;width:45px">未冻结</div>
<div class="bd g" style="left:1495px;top:651px;width:45px">未拉黑</div>
<div class="ab lk" style="left:1563px;top:653px"><span style="font-size:0.94em">点击查看</span></div>
<div class="ab td" style="left:1648px;top:654px;letter-spacing:-0.2px">2024-03-28T05:05:02</div>
<div class="ab" style="left:1855px;top:651px;width:94px;height:30px;border:1px solid #ccc;border-radius:3px;background:#fff"></div>
<div class="ab" style="left:1923px;top:651px;width:1px;height:30px;background:#ccc"></div>
<div class="ab" style="left:1874px;top:658px;font-size:14px;line-height:16px;color:#444">操作</div>
<div class="car" style="left:1932px;top:664px;border-top-color:#333;border-left-width:4px;border-right-width:4px;border-top-width:4px"></div>
<div class="ab td" style="left:232px;top:695px">4012769</div>
<div class="ab td" style="left:301px;top:695px">kvalen@qq.com</div>
<div class="ab td" style="left:474px;top:695px"><span style="font-size:0.94em">测试</span></div>
<div class="ab td" style="left:572px;top:695px">0</div>
<div class="ab td" style="left:640px;top:695px">0</div>
<div class="ab td" style="left:765px;top:695px">0</div>
<div class="bd g" style="left:856px;top:692px;width:56px">真实店铺</div>
<div class="ab lk" style="left:936px;top:694px"><span style="font-size:0.94em">点击查看</span></div>
<div class="ab td" style="left:1004px;top:695px">2594</div>
<div class="ab td" style="left:1173px;top:695px">taida</div>
<div class="bd r" style="left:1345px;top:692px;width:45px">不推荐</div>
<div class="bd g" style="left:1426px;top:692px;width:45px">未冻结</div>
<div class="bd g" style="left:1495px;top:692px;width:45px">未拉黑</div>
<div class="ab lk" style="left:1563px;top:694px"><span style="font-size:0.94em">点击查看</span></div>
<div class="ab td" style="left:1648px;top:695px;letter-spacing:-0.2px">2024-03-25T22:08:28</div>
<div class="ab" style="left:1855px;top:692px;width:94px;height:30px;border:1px solid #ccc;border-radius:3px;background:#fff"></div>
<div class="ab" style="left:1923px;top:692px;width:1px;height:30px;background:#ccc"></div>
<div class="ab" style="left:1874px;top:699px;font-size:14px;line-height:16px;color:#444">操作</div>
<div class="car" style="left:1932px;top:705px;border-top-color:#333;border-left-width:4px;border-right-width:4px;border-top-width:4px"></div>
<div class="ab td" style="left:232px;top:736px">4012764</div>
<div class="ab td" style="left:301px;top:736px">hgfhfhgfh@gmail.com</div>
<div class="ab td" style="left:474px;top:736px">5646546</div>
<div class="ab td" style="left:572px;top:736px">0</div>
<div class="ab td" style="left:640px;top:736px">0</div>
<div class="ab td" style="left:765px;top:736px">0</div>
<div class="bd g" style="left:856px;top:733px;width:56px">真实店铺</div>
<div class="ab lk" style="left:936px;top:735px"><span style="font-size:0.94em">点击查看</span></div>
<div class="ab td" style="left:1004px;top:736px">0</div>
<div class="ab td" style="left:1173px;top:736px">daishucheshi2@gmail.com</div>
<div class="bd r" style="left:1345px;top:733px;width:45px">不推荐</div>
<div class="bd g" style="left:1426px;top:733px;width:45px">未冻结</div>
<div class="bd g" style="left:1495px;top:733px;width:45px">未拉黑</div>
<div class="ab lk" style="left:1563px;top:735px"><span style="font-size:0.94em">点击查看</span></div>
<div class="ab td" style="left:1648px;top:736px;letter-spacing:-0.2px">2024-01-18T23:10:43</div>
<div class="ab" style="left:1855px;top:733px;width:94px;height:30px;border:1px solid #ccc;border-radius:3px;background:#fff"></div>
<div class="ab" style="left:1923px;top:733px;width:1px;height:30px;background:#ccc"></div>
<div class="ab" style="left:1874px;top:740px;font-size:14px;line-height:16px;color:#444">操作</div>
<div class="car" style="left:1932px;top:746px;border-top-color:#333;border-left-width:4px;border-right-width:4px;border-top-width:4px"></div>
<div class="ab td" style="left:232px;top:777px">4012762</div>
<div class="ab td" style="left:301px;top:777px">daishucheshi6@gmail.com</div>
<div class="ab td" style="left:474px;top:777px">646465465</div>
<div class="ab td" style="left:572px;top:777px">0</div>
<div class="ab td" style="left:640px;top:777px">0</div>
<div class="ab td" style="left:765px;top:777px">0</div>
<div class="bd g" style="left:856px;top:774px;width:56px">真实店铺</div>
<div class="ab lk" style="left:936px;top:776px"><span style="font-size:0.94em">点击查看</span></div>
<div class="ab td" style="left:1004px;top:777px">0</div>
<div class="ab td" style="left:1173px;top:777px">daishu004</div>
<div class="bd r" style="left:1345px;top:774px;width:45px">不推荐</div>
<div class="bd g" style="left:1426px;top:774px;width:45px">未冻结</div>
<div class="bd g" style="left:1495px;top:774px;width:45px">未拉黑</div>
<div class="ab lk" style="left:1563px;top:776px"><span style="font-size:0.94em">点击查看</span></div>
<div class="ab td" style="left:1648px;top:777px;letter-spacing:-0.2px">2024-01-18T21:35:53</div>
<div class="ab" style="left:1855px;top:774px;width:94px;height:30px;border:1px solid #ccc;border-radius:3px;background:#fff"></div>
<div class="ab" style="left:1923px;top:774px;width:1px;height:30px;background:#ccc"></div>
<div class="ab" style="left:1874px;top:781px;font-size:14px;line-height:16px;color:#444">操作</div>
<div class="car" style="left:1932px;top:787px;border-top-color:#333;border-left-width:4px;border-right-width:4px;border-top-width:4px"></div>
<div class="ab td" style="left:232px;top:818px">4012761</div>
<div class="ab td" style="left:301px;top:818px">daishucheshi2@gmail.com</div>
<div class="ab td" style="left:474px;top:818px">564646546</div>
<div class="ab td" style="left:572px;top:818px">0</div>
<div class="ab td" style="left:640px;top:818px">1</div>
<div class="ab td" style="left:765px;top:818px">1</div>
<div class="bd g" style="left:856px;top:815px;width:56px">真实店铺</div>
<div class="ab lk" style="left:936px;top:817px"><span style="font-size:0.94em">点击查看</span></div>
<div class="ab td" style="left:1004px;top:818px">0</div>
<div class="ab td" style="left:1173px;top:818px">daishu004</div>
<div class="bd r" style="left:1345px;top:815px;width:45px">不推荐</div>
<div class="bd g" style="left:1426px;top:815px;width:45px">未冻结</div>
<div class="bd g" style="left:1495px;top:815px;width:45px">未拉黑</div>
<div class="ab lk" style="left:1563px;top:817px"><span style="font-size:0.94em">点击查看</span></div>
<div class="ab td" style="left:1648px;top:818px;letter-spacing:-0.2px">2024-01-18T21:31:10</div>
<div class="ab" style="left:1855px;top:815px;width:94px;height:30px;border:1px solid #ccc;border-radius:3px;background:#fff"></div>
<div class="ab" style="left:1923px;top:815px;width:1px;height:30px;background:#ccc"></div>
<div class="ab" style="left:1874px;top:822px;font-size:14px;line-height:16px;color:#444">操作</div>
<div class="car" style="left:1932px;top:828px;border-top-color:#333;border-left-width:4px;border-right-width:4px;border-top-width:4px"></div>
<div class="ab td" style="left:232px;top:859px">4012752</div>
<div class="ab td" style="left:301px;top:859px">daishuceshi@gmail.com</div>
<div class="ab td" style="left:474px;top:859px">daishuceshi</div>
<div class="ab td" style="left:572px;top:859px">0</div>
<div class="ab td" style="left:640px;top:859px">0</div>
<div class="ab td" style="left:765px;top:859px">0</div>
<div class="bd g" style="left:856px;top:856px;width:56px">真实店铺</div>
<div class="ab lk" style="left:936px;top:858px"><span style="font-size:0.94em">点击查看</span></div>
<div class="ab td" style="left:1004px;top:859px">0</div>
<div class="ab td" style="left:1173px;top:859px">daishu004</div>
<div class="bd r" style="left:1345px;top:856px;width:45px">不推荐</div>
<div class="bd g" style="left:1426px;top:856px;width:45px">未冻结</div>
<div class="bd g" style="left:1495px;top:856px;width:45px">未拉黑</div>
<div class="ab lk" style="left:1563px;top:858px"><span style="font-size:0.94em">点击查看</span></div>
<div class="ab td" style="left:1648px;top:859px;letter-spacing:-0.2px">2024-01-18T00:01:18</div>
<div class="ab" style="left:1855px;top:856px;width:94px;height:30px;border:1px solid #ccc;border-radius:3px;background:#fff"></div>
<div class="ab" style="left:1923px;top:856px;width:1px;height:30px;background:#ccc"></div>
<div class="ab" style="left:1874px;top:863px;font-size:14px;line-height:16px;color:#444">操作</div>
<div class="car" style="left:1932px;top:869px;border-top-color:#333;border-left-width:4px;border-right-width:4px;border-top-width:4px"></div>
<div class="ab td" style="left:232px;top:900px">4012744</div>
<div class="ab td" style="left:301px;top:900px">vsfafaf73@gmail.com</div>
<div class="ab td" style="left:474px;top:900px">romantic</div>
<div class="ab td" style="left:572px;top:900px">C</div>
<div class="ab td" style="left:640px;top:900px">0</div>
<div class="ab td" style="left:765px;top:900px">0</div>
<div class="bd g" style="left:856px;top:897px;width:56px">真实店铺</div>
<div class="ab lk" style="left:936px;top:899px"><span style="font-size:0.94em">点击查看</span></div>
<div class="ab td" style="left:1004px;top:900px">14851</div>
<div class="ab td" style="left:1095px;top:900px;letter-spacing:-0.3px">4622.07</div>
<div class="ab td" style="left:1173px;top:900px">unrotope1980@yahoo.com</div>
<div class="bd g" style="left:1345px;top:897px;width:56px">店铺推荐</div>
<div class="bd g" style="left:1426px;top:897px;width:45px">未冻结</div>
<div class="bd g" style="left:1495px;top:897px;width:45px">未拉黑</div>
<div class="ab lk" style="left:1563px;top:899px"><span style="font-size:0.94em">点击查看</span></div>
<div class="ab td" style="left:1648px;top:900px;letter-spacing:-0.2px">2024-01-16T19:07:38</div>
<div class="ab" style="left:1855px;top:897px;width:94px;height:30px;border:1px solid #ccc;border-radius:3px;background:#fff"></div>
<div class="ab" style="left:1923px;top:897px;width:1px;height:30px;background:#ccc"></div>
<div class="ab" style="left:1874px;top:904px;font-size:14px;line-height:16px;color:#444">操作</div>
<div class="car" style="left:1932px;top:910px;border-top-color:#333;border-left-width:4px;border-right-width:4px;border-top-width:4px"></div>
<div class="ab td" style="left:232px;top:941px">4012743</div>
<div class="ab td" style="left:301px;top:941px">168000001@gmail.com</div>
<div class="ab td" style="left:474px;top:941px">Helena</div>
<div class="ab td" style="left:572px;top:941px">0</div>
<div class="ab td" style="left:640px;top:941px">0</div>
<div class="ab td" style="left:765px;top:941px">0</div>
<div class="bd g" style="left:856px;top:938px;width:56px">真实店铺</div>
<div class="ab lk" style="left:936px;top:940px"><span style="font-size:0.94em">点击查看</span></div>
<div class="ab td" style="left:1004px;top:941px">16679</div>
<div class="ab td" style="left:1095px;top:941px;letter-spacing:-0.3px">3189.69</div>
<div class="ab td" style="left:1173px;top:941px">unrotope1980@yahoo.com</div>
<div class="bd g" style="left:1345px;top:938px;width:56px">店铺推荐</div>
<div class="bd g" style="left:1426px;top:938px;width:45px">未冻结</div>
<div class="bd g" style="left:1495px;top:938px;width:45px">未拉黑</div>
<div class="ab lk" style="left:1563px;top:940px"><span style="font-size:0.94em">点击查看</span></div>
<div class="ab td" style="left:1648px;top:941px;letter-spacing:-0.2px">2024-01-16T19:07:34</div>
<div class="ab" style="left:1855px;top:938px;width:94px;height:30px;border:1px solid #ccc;border-radius:3px;background:#fff"></div>
<div class="ab" style="left:1923px;top:938px;width:1px;height:30px;background:#ccc"></div>
<div class="ab" style="left:1874px;top:945px;font-size:14px;line-height:16px;color:#444">操作</div>
<div class="car" style="left:1932px;top:951px;border-top-color:#333;border-left-width:4px;border-right-width:4px;border-top-width:4px"></div>
<div class="ab" style="left:1617px;top:484px;font-weight:bold;line-height:36px;color:rgba(214,214,214,0.88)"><span style="font-size:34px;letter-spacing:-0.5px">YYDS</span><span style="font-size:28.5px">源码网</span></div>
<div class="pg" style="left:221px;width:51px;color:#4a8fc9"><span style="font-size:0.94em">首页</span></div>
<div class="pg" style="left:276px;width:62px;color:#4a8fc9"><span style="font-size:0.94em">上一页</span></div>
<div class="pg" style="left:343px;width:35px;color:#a8503a"><b>1</b></div>
<div class="pg" style="left:382px;width:62px;color:#4a8fc9"><span style="font-size:0.94em">下一页</span></div>
<div class="pg" style="left:449px;width:52px;color:#4a8fc9"><span style="font-size:0.94em">尾页</span></div>
</body></html>
